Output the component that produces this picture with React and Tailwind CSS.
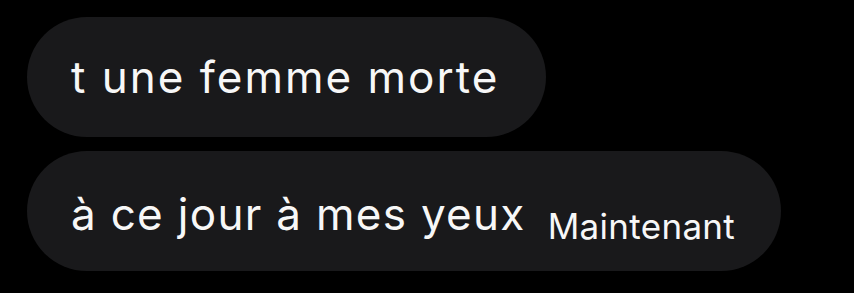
export default function App() {
  return (
    <div className="w-[854px] h-[293px] bg-black flex flex-col items-start pl-[27px] pt-[17px] gap-[14px]" style={{ fontFamily: "Inter, 'Noto Sans', sans-serif" }}>
      <div className="h-[120px] rounded-full bg-[#19191b] flex items-center pl-[44px] pr-[47px]">
        <span className="text-[44px] leading-none text-[#f7f7f7] tracking-[2px]">t une femme morte</span>
      </div>
      <div className="h-[120px] rounded-full bg-[#19191b] flex items-baseline pl-[44px] pr-[46px] pt-[41px]">
        <span className="text-[44px] leading-none text-[#f7f7f7] tracking-[1.3px]">à ce jour à mes yeux</span>
        <span className="ml-[22px] text-[35px] leading-none text-[#f7f7f7] tracking-[0.3px] relative top-[9px]">Maintenant</span>
      </div>
    </div>
  );
}
